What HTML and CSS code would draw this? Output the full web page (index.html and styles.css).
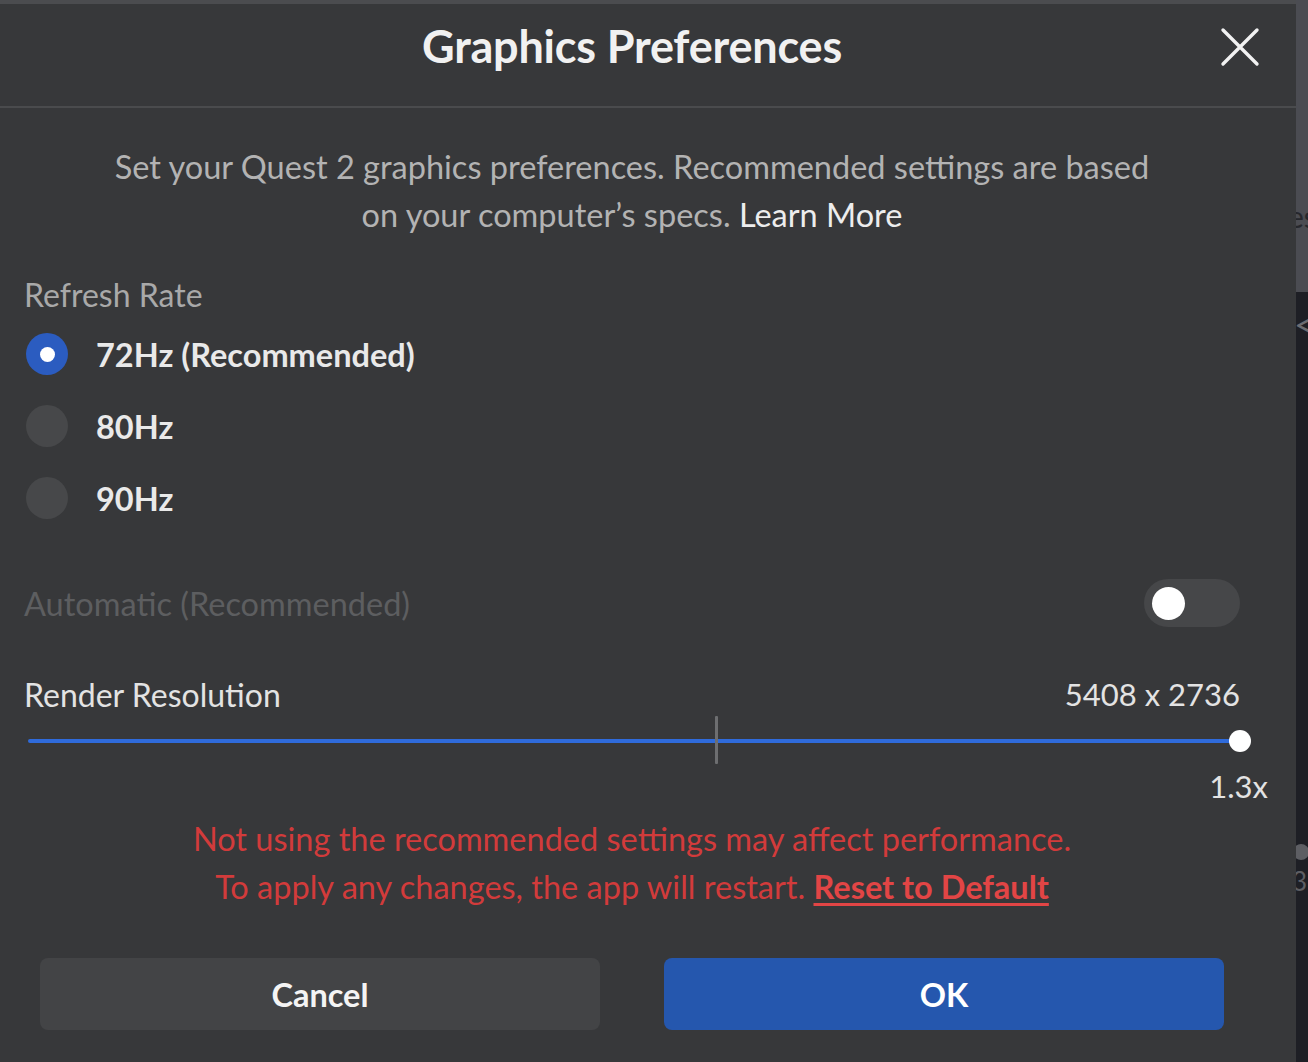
FILE: index.html
```html
<!DOCTYPE html>
<html lang="en">
<head>
<meta charset="utf-8">
<title>Graphics Preferences</title>
<link rel="stylesheet" href="styles.css">
</head>
<body>
<div class="screen">
  <div class="dialog">
    <div class="topbar"></div>
    <header class="header">
      <div class="header-side"></div>
      <h1 class="title">Graphics Preferences</h1>
      <div class="header-side header-right">
        <svg class="close" width="40" height="40" viewBox="0 0 40 40" aria-label="Close">
          <path d="M3 3 L37 37 M37 3 L3 37" stroke="#f2f2f2" stroke-width="3.4" stroke-linecap="round" fill="none"/>
        </svg>
      </div>
    </header>
    <main class="content">
      <p class="desc">Set your Quest 2 graphics preferences. Recommended settings are based<br>on your computer’s specs. <span class="learn">Learn More</span></p>

      <div class="section-label">Refresh Rate</div>
      <div class="radios">
        <div class="radio-row"><span class="radio selected"></span><span class="radio-label">72Hz (Recommended)</span></div>
        <div class="radio-row"><span class="radio"></span><span class="radio-label">80Hz</span></div>
        <div class="radio-row"><span class="radio"></span><span class="radio-label">90Hz</span></div>
      </div>

      <div class="auto-row">
        <span class="auto-label">Automatic (Recommended)</span>
        <span class="toggle"><span class="knob"></span></span>
      </div>

      <div class="res-row">
        <span class="res-label">Render Resolution</span>
        <span class="res-value">5408 x 2736</span>
      </div>
      <div class="slider">
        <div class="track"></div>
        <div class="tick"></div>
        <div class="thumb"></div>
      </div>
      <div class="scale">1.3x</div>

      <p class="warning">Not using the recommended settings may affect performance.<br>To apply any changes, the app will restart. <a class="reset" href="#">Reset to Default</a></p>

      <div class="buttons">
        <button class="btn btn-cancel">Cancel</button>
        <button class="btn btn-ok">OK</button>
      </div>
    </main>
  </div>
  <aside class="side">
    <div class="side-top"><span class="side-text">es</span></div>
    <div class="side-bottom">
      <span class="side-chev">&lt;</span>
      <span class="side-dot"></span>
      <span class="side-num">3</span>
    </div>
  </aside>
</div>
</body>
</html>
```

FILE: styles.css
```css
* { box-sizing: border-box; }

html, body {
  margin: 0;
  padding: 0;
  background: #1e1f24;
}

body {
  font-family: "Lato", "Noto Sans", "Liberation Sans", sans-serif;
  width: 1308px;
  height: 1062px;
  overflow: hidden;
}

.screen {
  display: flex;
  width: 1308px;
  height: 1062px;
}

.dialog {
  width: 1296px;
  height: 1062px;
  background: #37383a;
  display: flex;
  flex-direction: column;
}

.topbar {
  height: 4px;
  background: #4b4c4f;
}

.header {
  height: 104px;
  border-bottom: 2px solid #4a4b4d;
  display: grid;
  grid-template-columns: 1fr auto 1fr;
  align-items: center;
  padding: 0 56px 18px 24px;
}

.title {
  margin: 0;
  font-size: 45px;
  font-weight: 700;
  color: #f1f1f1;
  letter-spacing: -0.2px;
}

.header-right {
  display: flex;
  justify-content: flex-end;
  margin-right: -20px;
  padding-top: 2px;
}

.close { display: block; }

.content {
  padding: 0 56px 0 24px;
  display: flex;
  flex-direction: column;
}

.desc {
  margin: 35px 0 0;
  text-align: center;
  font-size: 32.5px;
  line-height: 48px;
  color: #b3b3b3;
}

.learn { color: #ededed; }

.section-label {
  margin-top: 36px;
  height: 40px;
  line-height: 40px;
  font-size: 32px;
  color: #a9a9a9;
}

.radios {
  margin-top: 3px;
  display: flex;
  flex-direction: column;
}

.radio-row {
  height: 72px;
  display: flex;
  align-items: center;
  gap: 28px;
}

.radio {
  width: 42px;
  height: 42px;
  margin-left: 2px;
  border-radius: 50%;
  background: #47484a;
  display: flex;
  align-items: center;
  justify-content: center;
}

.radio.selected { background: #2b5cc0; }

.radio.selected::after {
  content: "";
  width: 15px;
  height: 15px;
  border-radius: 50%;
  background: #ffffff;
}

.radio-label {
  font-size: 32.5px;
  font-weight: 700;
  color: #e9e9e9;
}

.auto-row {
  margin-top: 45px;
  height: 48px;
  display: flex;
  align-items: center;
  justify-content: space-between;
}

.auto-label {
  font-size: 32.5px;
  color: #5d5e60;
}

.toggle {
  width: 96px;
  height: 48px;
  border-radius: 24px;
  background: #464749;
  display: flex;
  align-items: center;
  padding-left: 8px;
}

.knob {
  width: 33px;
  height: 33px;
  border-radius: 50%;
  background: #ffffff;
}

.res-row {
  margin-top: 47px;
  height: 40px;
  display: flex;
  align-items: center;
  justify-content: space-between;
  font-size: 32px;
  color: #e3e3e3;
}

.res-value { font-size: 31px; }

.slider {
  margin-top: 2px;
  height: 50px;
  position: relative;
}

.track {
  position: absolute;
  left: 4px;
  right: 0;
  top: 23px;
  height: 4px;
  border-radius: 2px;
  background: #2f6bdb;
}

.tick {
  position: absolute;
  left: 691px;
  top: 0;
  width: 3px;
  height: 48px;
  background: #6d6e70;
  border-radius: 1px;
}

.thumb {
  position: absolute;
  right: -11px;
  top: 14px;
  width: 22px;
  height: 22px;
  border-radius: 50%;
  background: #ffffff;
}

.scale {
  margin-top: 2px;
  margin-right: -28px;
  height: 36px;
  line-height: 36px;
  text-align: right;
  font-size: 31px;
  color: #e3e3e3;
}

.warning {
  margin: 11px 0 0;
  text-align: center;
  font-size: 32.5px;
  line-height: 48px;
  color: #d23b3b;
}

.reset {
  color: #e24545;
  font-weight: 700;
  text-decoration: underline;
  text-underline-offset: 4px;
}

.buttons {
  margin-top: 47px;
  padding: 0 16px;
  display: grid;
  grid-template-columns: 1fr 1fr;
  gap: 64px;
}

.btn {
  height: 72px;
  border: none;
  border-radius: 8px;
  font-family: inherit;
  font-size: 32.5px;
  font-weight: 700;
  color: #f4f4f4;
  cursor: pointer;
}

.btn-cancel { background: #434446; }
.btn-ok { background: #2557ae; color: #ffffff; }

.side {
  width: 12px;
  height: 1062px;
  display: flex;
  flex-direction: column;
  overflow: hidden;
}

.side-top {
  height: 292px;
  background: #4b4c52;
  overflow: hidden;
  padding-top: 196px;
}

.side-text {
  display: block;
  margin-left: -8px;
  font-size: 30px;
  line-height: 40px;
  color: #26272c;
  white-space: nowrap;
}

.side-bottom {
  flex: 1;
  background: #1e1f25;
  display: flex;
  flex-direction: column;
  overflow: hidden;
}

.side-chev {
  margin-top: 12px;
  margin-left: -2px;
  font-size: 36px;
  line-height: 40px;
  color: #6c6d72;
}

.side-dot {
  margin-top: 500px;
  margin-left: -3px;
  width: 16px;
  height: 16px;
  border-radius: 50%;
  background: #5d5e63;
  flex: none;
}

.side-num {
  margin-top: 6px;
  margin-left: -4px;
  font-size: 26px;
  line-height: 30px;
  color: #5d5e63;
}
```
